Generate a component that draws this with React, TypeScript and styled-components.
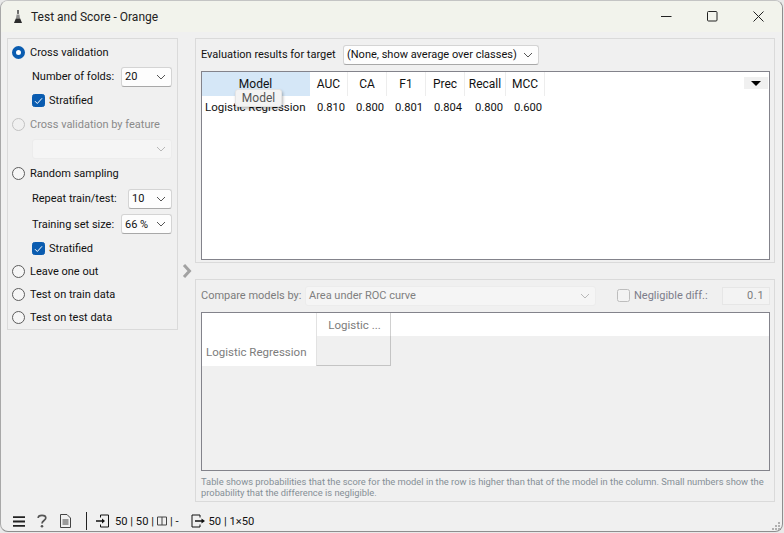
import React from 'react';
import styled, { createGlobalStyle } from 'styled-components';

const GlobalStyle = createGlobalStyle`
  html, body {
    margin: 0;
    padding: 0;
    background: #e9e9e9;
  }
  * {
    box-sizing: border-box;
  }
`;

const Window = styled.div`
  width: 783px;
  height: 532px;
  margin: 0;
  background: #f0f0f0;
  border: 1px solid #8e8e8e;
  border-left-color: #a8a8a8;
  border-top-color: #c4c4c4;
  border-radius: 8px;
  overflow: hidden;
  display: flex;
  flex-direction: column;
  font-family: 'Roboto', 'Liberation Sans', sans-serif;
  font-size: 11px;
  color: #111;
`;

const TitleBar = styled.div`
  height: 31px;
  flex: none;
  background: #f2f3ec;
  display: flex;
  align-items: center;
  padding: 0 1px 0 12px;
  font-size: 12px;
  color: #222;
`;

const TitleText = styled.span`
  margin-left: 8px;
  flex: 1;
`;

const WinButton = styled.div`
  width: 46px;
  height: 31px;
  display: flex;
  align-items: center;
  justify-content: center;
`;

const Main = styled.div`
  flex: 1;
  display: flex;
  padding: 6px 7px 0 6px;
  min-height: 0;
`;

const SidePanel = styled.div`
  width: 171px;
  height: 292px;
  flex: none;
  border: 1px solid #dadada;
  padding-top: 2px;
  display: flex;
  flex-direction: column;
`;

const Row = styled.div<{ $h: number; $indent?: number; $off?: boolean }>`
  height: ${(p) => p.$h}px;
  flex: none;
  display: flex;
  align-items: center;
  padding-left: ${(p) => p.$indent ?? 4}px;
  padding-right: 5px;
  white-space: nowrap;
  color: ${(p) => (p.$off ? '#8a8a8a' : '#111')};
`;

const Radio = styled.span<{ $on?: boolean; $off?: boolean }>`
  width: 13px;
  height: 13px;
  flex: none;
  border-radius: 50%;
  margin-right: 5px;
  background: ${(p) => (p.$on ? '#fff' : p.$off ? '#f0f0f0' : '#f6f6f6')};
  border: ${(p) =>
    p.$on ? '4px solid #0a5cb0' : p.$off ? '1px solid #c2c2c2' : '1px solid #5c5c5c'};
`;

const Check = styled.span<{ $on?: boolean }>`
  width: 13px;
  height: 13px;
  flex: none;
  border-radius: 2.5px;
  margin-right: 4px;
  display: flex;
  align-items: center;
  justify-content: center;
  background: ${(p) => (p.$on ? '#0a5cb0' : '#f3f3f3')};
  border: 1px solid ${(p) => (p.$on ? '#0a5cb0' : '#bdbdbd')};
`;

const FieldLabel = styled.span`
  flex: 1;
`;

const Combo = styled.div<{ $w: number; $off?: boolean }>`
  width: ${(p) => p.$w}px;
  height: 20px;
  flex: none;
  display: flex;
  align-items: center;
  justify-content: space-between;
  padding: 0 5px 0 3px;
  white-space: nowrap;
  background: ${(p) => (p.$off ? '#f5f5f5' : '#fdfdfd')};
  border: 1px solid ${(p) => (p.$off ? '#ececec' : '#d4d4d4')};
  border-bottom-color: ${(p) => (p.$off ? '#ececec' : '#a8a8a8')};
  border-radius: 3px;
  color: ${(p) => (p.$off ? '#808080' : '#111')};
`;

const Splitter = styled.div`
  width: 17px;
  flex: none;
  display: flex;
  justify-content: center;
  padding-top: 226px;
  padding-left: 1px;
`;

const RightColumn = styled.div`
  flex: 1;
  display: flex;
  flex-direction: column;
  gap: 16px;
  min-width: 0;
`;

const GroupBox = styled.div<{ $h: number; $off?: boolean }>`
  height: ${(p) => p.$h}px;
  flex: none;
  border: 1px solid #dadada;
  padding: 5px 4px 2px 5px;
  display: flex;
  flex-direction: column;
  color: ${(p) => (p.$off ? '#7c7c7c' : '#111')};
`;

const ToolRow = styled.div`
  height: 21px;
  flex: none;
  margin-bottom: 6px;
  display: flex;
  align-items: center;
`;

const ToolLabel = styled.span<{ $w: number }>`
  width: ${(p) => p.$w}px;
  flex: none;
  white-space: nowrap;
`;

const ScoreTable = styled.div`
  position: relative;
  height: 189px;
  flex: none;
  background: #fff;
  border: 1px solid #83838b;
  font-size: 12px;
`;

const ScoreGrid = styled.div`
  display: grid;
  grid-template-columns: 108px 38px 39px 39px 39px 41px 39px;
  grid-template-rows: 24px 22px;
  width: max-content;
`;

const HeadCell = styled.div<{ $active?: boolean }>`
  display: flex;
  align-items: center;
  justify-content: center;
  background: ${(p) => (p.$active ? '#d5e7f7' : '#fff')};
  border-right: 1px solid ${(p) => (p.$active ? '#d5e7f7' : '#ededed')};
`;

const NameCell = styled.div`
  display: flex;
  align-items: center;
  padding-left: 3px;
  white-space: nowrap;
  font-size: 11.5px;
`;

const ValueCell = styled.div`
  display: flex;
  align-items: center;
  justify-content: flex-end;
  padding-right: 3px;
  font-size: 11.2px;
`;

const Tooltip = styled.div`
  position: absolute;
  left: 33px;
  top: 17px;
  width: 47px;
  height: 18px;
  background: #f3f3f3;
  border: 1px solid #e4e4e4;
  border-radius: 3px;
  box-shadow: 1px 2px 3px rgba(0, 0, 0, 0.28);
  color: #555;
  display: flex;
  align-items: center;
  justify-content: center;
`;

const CornerButton = styled.div`
  position: absolute;
  right: 1px;
  top: 5px;
  width: 24px;
  height: 12px;
  background: #f0f0f0;
  display: flex;
  align-items: center;
  justify-content: center;
`;

const Triangle = styled.span`
  width: 0;
  height: 0;
  border-left: 5px solid transparent;
  border-right: 5px solid transparent;
  border-top: 5px solid #000;
`;

const CompareOptions = styled.div`
  display: flex;
  align-items: center;
  margin-left: 21px;
  white-space: nowrap;
  color: #7c7c8a;
`;

const SpinBox = styled.div`
  width: 48px;
  height: 18px;
  margin-left: 14px;
  background: #f3f3f3;
  border: 1px solid #e6e6e6;
  display: flex;
  align-items: center;
  justify-content: flex-end;
  padding-right: 4px;
  letter-spacing: 0.8px;
  color: #7c7c7c;
`;

const CompareTable = styled.div`
  height: 159px;
  flex: none;
  background: #f0f0f0;
  border: 1px solid #83838b;
  display: grid;
  grid-template-columns: 114px 75px 1fr;
  grid-template-rows: 23px 30px;
  font-size: 11.5px;
`;

const WhiteCell = styled.div`
  background: #fff;
`;

const CompareHead = styled.div`
  background: #fff;
  border-left: 1px solid #e2e2e2;
  border-right: 1px solid #d0d0d0;
  display: flex;
  align-items: center;
  justify-content: center;
  padding-left: 2px;
`;

const CompareName = styled.div`
  background: #fff;
  display: flex;
  align-items: flex-end;
  padding: 0 0 7px 4px;
  white-space: nowrap;
`;

const CompareCell = styled.div`
  border-right: 1px solid #c4c4c4;
  border-bottom: 1px solid #c4c4c4;
  border-left: 1px solid #e2e2e2;
`;

const Note = styled.p`
  margin: 5px 0 0;
  font-size: 9.33px;
  line-height: 11px;
  color: #858f96;
  white-space: nowrap;
`;

const StatusBar = styled.div`
  height: 22px;
  flex: none;
  margin-top: auto;
  margin-bottom: -1px;
  display: flex;
  align-items: center;
  padding-left: 12px;
  position: relative;
`;

const StatusIcon = styled.span<{ $gap?: number; $lead?: number }>`
  display: flex;
  margin-left: ${(p) => p.$lead ?? 0}px;
  margin-right: ${(p) => p.$gap ?? 0}px;
`;

const Divider = styled.span`
  width: 1px;
  height: 18px;
  background: #222;
  margin-right: 9px;
`;

const StatusText = styled.span`
  display: flex;
  align-items: center;
  gap: 3px;
  font-size: 11.2px;
  color: #111;
`;

const Grip = styled.span`
  position: absolute;
  right: 1px;
  bottom: 1px;
  display: flex;
`;

const Chevron = ({ color = '#555' }: { color?: string }) => (
  <svg width="10" height="6" viewBox="0 0 10 6" fill="none">
    <path d="M1 1l4 4 4-4" stroke={color} strokeWidth="1" />
  </svg>
);

const Tick = () => (
  <svg width="9" height="8" viewBox="0 0 9 8" fill="none">
    <path d="M1 4.200l2.300 2.300L8 1.300" stroke="#fff" strokeWidth="1" />
  </svg>
);

const AppLogo = () => (
  <svg width="10" height="15" viewBox="0 0 10 15">
    <path d="M4 1h2v3l-.2 1H4.200L4 4z" fill="#6b6b6b" />
    <path d="M3.600 5.500h2.800L7 9.500H3z" fill="#8d8d8d" />
    <path d="M2.800 9.500h4.400L9 14H1z" fill="#2c2c2c" />
  </svg>
);

const InputIcon = () => (
  <svg width="14" height="14" viewBox="0 0 14 14" fill="none" stroke="#111">
    <path d="M4.500 3.500V1h8v12h-8v-2.500" />
    <path d="M0 7h7.500" strokeWidth="1.400" />
    <path d="M6 4.500L9 7l-3 2.500z" fill="#111" stroke="none" />
  </svg>
);

const OutputIcon = () => (
  <svg width="14" height="14" viewBox="0 0 14 14" fill="none" stroke="#111">
    <path d="M9 3.500V1H1v12h8v-2.500" />
    <path d="M4 7h7" strokeWidth="1.400" />
    <path d="M10.500 4.500L14 7l-3.500 2.500z" fill="#111" stroke="none" />
  </svg>
);

const scoreColumns = ['AUC', 'CA', 'F1', 'Prec', 'Recall', 'MCC'];
const scoreValues = ['0.810', '0.800', '0.801', '0.804', '0.800', '0.600'];

export default function App() {
  return (
    <>
      <GlobalStyle />
      <Window>
        <TitleBar>
          <AppLogo />
          <TitleText>Test and Score - Orange</TitleText>
          <WinButton>
            <svg width="11" height="11" viewBox="0 0 11 11">
              <path d="M0 5.500h10.500" stroke="#222" />
            </svg>
          </WinButton>
          <WinButton>
            <svg width="11" height="11" viewBox="0 0 11 11" fill="none">
              <rect x="0.500" y="0.500" width="9.500" height="9.500" rx="1" stroke="#222" />
            </svg>
          </WinButton>
          <WinButton>
            <svg width="11" height="11" viewBox="0 0 11 11">
              <path d="M.5.500l10 10M10.500.500l-10 10" stroke="#222" />
            </svg>
          </WinButton>
        </TitleBar>

        <Main>
          <SidePanel>
            <Row $h={23}>
              <Radio $on />
              Cross validation
            </Row>
            <Row $h={25} $indent={24}>
              <FieldLabel>Number of folds:</FieldLabel>
              <Combo $w={51}>
                20
                <Chevron />
              </Combo>
            </Row>
            <Row $h={23} $indent={24}>
              <Check $on>
                <Tick />
              </Check>
              Stratified
            </Row>
            <Row $h={24} $off>
              <Radio $off />
              Cross validation by feature
            </Row>
            <Row $h={25} $indent={24}>
              <Combo $w={140} $off>
                <span />
                <Chevron color="#b8b8b8" />
              </Combo>
            </Row>
            <Row $h={25}>
              <Radio />
              Random sampling
            </Row>
            <Row $h={25} $indent={24}>
              <FieldLabel>Repeat train/test:</FieldLabel>
              <Combo $w={44}>
                10
                <Chevron />
              </Combo>
            </Row>
            <Row $h={26} $indent={24}>
              <FieldLabel>Training set size:</FieldLabel>
              <Combo $w={51}>
                66 %
                <Chevron />
              </Combo>
            </Row>
            <Row $h={23} $indent={24}>
              <Check $on>
                <Tick />
              </Check>
              Stratified
            </Row>
            <Row $h={23}>
              <Radio />
              Leave one out
            </Row>
            <Row $h={23}>
              <Radio />
              Test on train data
            </Row>
            <Row $h={23}>
              <Radio />
              Test on test data
            </Row>
          </SidePanel>

          <Splitter>
            <svg width="10" height="14" viewBox="0 0 10 14" fill="none">
              <path d="M2 1l5.500 6L2 13" stroke="#a2a2a2" strokeWidth="3" />
            </svg>
          </Splitter>

          <RightColumn>
            <GroupBox $h={225}>
              <ToolRow>
                <ToolLabel $w={142}>Evaluation results for target</ToolLabel>
                <Combo $w={196}>
                  (None, show average over classes)
                  <Chevron />
                </Combo>
              </ToolRow>
              <ScoreTable>
                <ScoreGrid>
                  <HeadCell $active>Model</HeadCell>
                  {scoreColumns.map((name) => (
                    <HeadCell key={name}>{name}</HeadCell>
                  ))}
                  <NameCell>Logistic Regression</NameCell>
                  {scoreValues.map((value, i) => (
                    <ValueCell key={i}>{value}</ValueCell>
                  ))}
                </ScoreGrid>
                <Tooltip>Model</Tooltip>
                <CornerButton>
                  <Triangle />
                </CornerButton>
              </ScoreTable>
            </GroupBox>

            <GroupBox $h={223} $off>
              <ToolRow>
                <ToolLabel $w={104}>Compare models by:</ToolLabel>
                <Combo $w={291} $off>
                  Area under ROC curve
                  <Chevron color="#b8b8b8" />
                </Combo>
                <CompareOptions>
                  <Check />
                  Negligible diff.:
                  <SpinBox>0.1</SpinBox>
                </CompareOptions>
              </ToolRow>
              <CompareTable>
                <WhiteCell />
                <CompareHead>Logistic ...</CompareHead>
                <WhiteCell />
                <CompareName>Logistic Regression</CompareName>
                <CompareCell />
              </CompareTable>
              <Note>
                Table shows probabilities that the score for the model in the row is higher than that of the model in the column. Small numbers show the
                <br />
                probability that the difference is negligible.
              </Note>
            </GroupBox>
          </RightColumn>
        </Main>

        <StatusBar>
          <StatusIcon $gap={12}>
            <svg width="12" height="11" viewBox="0 0 12 11">
              <path d="M0 1.200h12M0 5.500h12M0 9.800h12" stroke="#222" strokeWidth="1.800" />
            </svg>
          </StatusIcon>
          <StatusIcon $gap={13}>
            <svg width="10" height="14" viewBox="0 0 10 14" fill="none">
              <path d="M1.200 4C1.200 .6 8.800 .6 8.800 4c0 2.500-3.800 2.600-3.800 5.500" stroke="#555" strokeWidth="1.700" />
              <circle cx="5" cy="12.300" r="1.300" fill="#555" />
            </svg>
          </StatusIcon>
          <StatusIcon $gap={15}>
            <svg width="11" height="14" viewBox="0 0 11 14" fill="none" stroke="#444">
              <path d="M.5.500h6.500l3.500 3.500v9.500H.5z" />
              <path d="M2.500 6h6M2.500 8h6M2.500 10h6" />
            </svg>
          </StatusIcon>
          <Divider />
          <StatusIcon $gap={5}>
            <InputIcon />
          </StatusIcon>
          <StatusText>
            50 | 50 |
            <svg width="10" height="10" viewBox="0 0 10 10" fill="none" stroke="#444">
              <path d="M.5 1h9v8h-9zM5 1v8" />
            </svg>
            | -
          </StatusText>
          <StatusIcon $gap={4} $lead={12}>
            <OutputIcon />
          </StatusIcon>
          <StatusText>50 | 1×50</StatusText>
          <Grip>
            <svg width="10" height="10" viewBox="0 0 10 10" fill="#b0b0b0">
              <rect x="7" y="1" width="2" height="2" />
              <rect x="4" y="4" width="2" height="2" />
              <rect x="7" y="4" width="2" height="2" />
              <rect x="1" y="7" width="2" height="2" />
              <rect x="4" y="7" width="2" height="2" />
              <rect x="7" y="7" width="2" height="2" />
            </svg>
          </Grip>
        </StatusBar>
      </Window>
    </>
  );
}
